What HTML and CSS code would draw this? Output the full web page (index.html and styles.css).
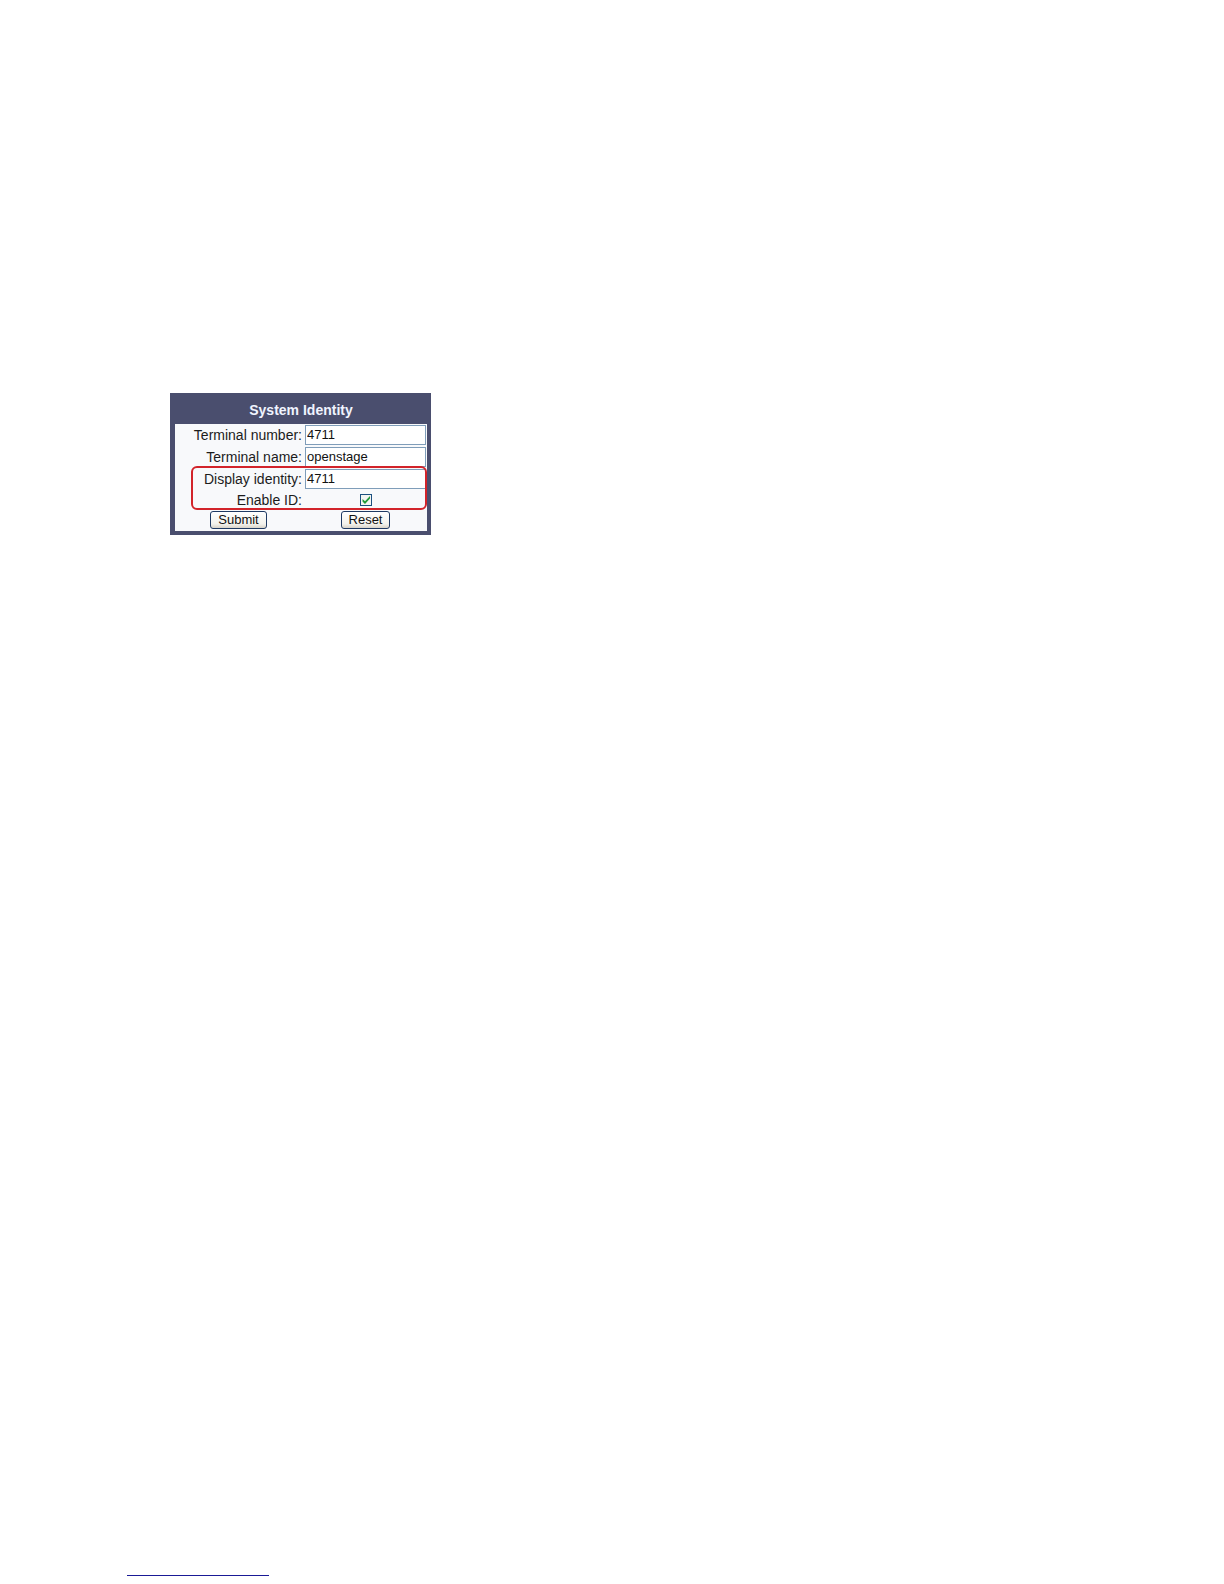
FILE: index.html
```html
<!DOCTYPE html>
<html lang="en">
<head>
<meta charset="utf-8">
<title>System Identity</title>
<link rel="stylesheet" href="styles.css">
</head>
<body>
<main class="content">
  <form class="panel">
    <h1 class="panel-title">System Identity</h1>
    <div class="panel-body">
      <div class="row">
        <label for="number">Terminal number:</label>
        <input class="field" id="number" type="text" value="4711">
      </div>
      <div class="row">
        <label for="name">Terminal name:</label>
        <input class="field" id="name" type="text" value="openstage">
      </div>
      <div class="highlight">
        <div class="row">
          <label for="display">Display identity:</label>
          <input class="field" id="display" type="text" value="4711">
        </div>
        <div class="row row-short">
          <label for="enable">Enable ID:</label>
          <span class="check">
            <input class="check-box" id="enable" type="checkbox" checked>
            <svg class="check-mark" viewBox="0 0 12 12" aria-hidden="true"><path d="M2.500 5v2.500l2.500 2.500 5-5.500V2L5 7.300z"/></svg>
          </span>
        </div>
      </div>
      <div class="row row-short actions">
        <button class="btn" type="submit">Submit</button>
        <button class="btn" type="reset">Reset</button>
      </div>
    </div>
  </form>
</main>
<footer class="footer"><hr class="rule"></footer>
</body>
</html>
```
FILE: styles.css
```css
* { box-sizing: border-box; }

body {
  margin: 0;
  min-height: 100vh;
  display: flex;
  flex-direction: column;
  background: #fff;
  color: #1c1c1c;
  font: 14px/20px "Liberation Sans", Arial, sans-serif;
}

.content {
  flex: 1;
  padding: 393px 170px 0;
}

.panel {
  max-width: 261px;
  padding: 0 4px 4px 5px;
  background: #4a4e6e;
}

.panel-title {
  margin: 0;
  padding: 7px 0 4px;
  color: #f0f4ff;
  font-size: 14px;
  line-height: 20px;
  text-align: center;
}

.panel-body {
  padding-bottom: 1px;
  background: #f8f9fb;
}

.row {
  display: grid;
  grid-template-columns: 127px 1fr;
  column-gap: 3px;
  align-items: center;
  height: 22px;
  padding-right: 1px;
}

.row-short { height: 20px; }

.row label { text-align: right; }

.field {
  width: 100%;
  height: 20px;
  margin: 0;
  padding: 0 1px 2px;
  border: 1px solid #7f9db9;
  border-radius: 0;
  background: #fff;
  color: #111;
  font: 13px "Liberation Sans", Arial, sans-serif;
}

/* Red frame drawn over the two identity rows */
.highlight { position: relative; }

.highlight::after {
  content: "";
  position: absolute;
  inset: -2px 0 0 16px;
  border: 2px solid #d2232a;
  border-radius: 6px;
  pointer-events: none;
}

.check {
  display: grid;
  place-items: center;
}

.check > * { grid-area: 1 / 1; }

.check-box {
  appearance: none;
  width: 12px;
  height: 12px;
  margin: 0;
  border: 1px solid #1c5180;
  background: #f4f5f2;
}

.check-mark {
  width: 12px;
  height: 12px;
  fill: #219a38;
  pointer-events: none;
  visibility: hidden;
}

.check-box:checked + .check-mark { visibility: visible; }

.actions { justify-items: center; }

.btn {
  height: 18px;
  padding: 0 7px;
  border: 1px solid #1f3a63;
  border-radius: 3px;
  background: linear-gradient(#fff, #f3f2ec 75%, #d8d3c8);
  color: #111;
  font: 13px/16px "Liberation Sans", Arial, sans-serif;
}

.footer { padding: 0 127px 8px; }

.rule {
  width: 142px;
  height: 1px;
  margin: 0;
  border: 0;
  background: #1a1a96;
}
```
